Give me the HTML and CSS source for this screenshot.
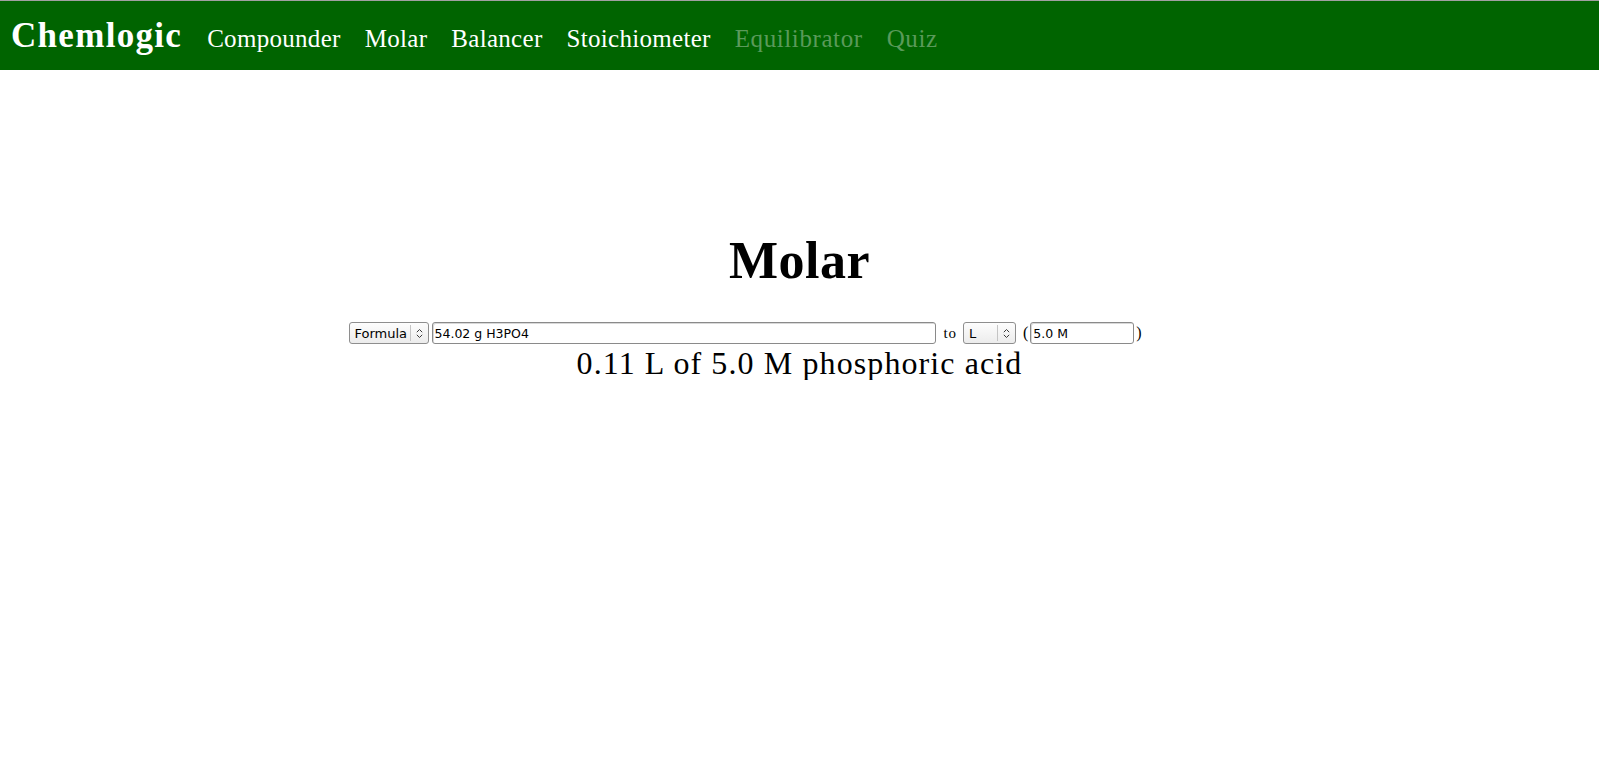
FILE: index.html
```html
<!DOCTYPE html>
<html>
<head>
<meta charset="utf-8">
<title>Chemlogic - Molar</title>
<link rel="stylesheet" href="styles.css">
</head>
<body>
<nav class="topbar">
  <a class="brand" href="#">Chemlogic</a>
  <a class="nav-link" href="#">Compounder</a>
  <a class="nav-link" href="#">Molar</a>
  <a class="nav-link" href="#">Balancer</a>
  <a class="nav-link" href="#">Stoichiometer</a>
  <a class="nav-link disabled" href="#">Equilibrator</a>
  <a class="nav-link disabled" href="#">Quiz</a>
</nav>
<main class="content">
  <h1 class="title">Molar</h1>
  <form class="molar-form">
    <span class="select sel-type"><span class="sel-text">Formula</span><span class="sel-btn"><svg width="9" height="11" viewBox="0 0 9 11"><path d="M1.8 4.2 L4.5 1.5 L7.2 4.2 M1.8 6.8 L4.5 9.5 L7.2 6.8" fill="none" stroke="#3a3a3a" stroke-width="1"/></svg></span></span>
    <input class="field field-main" type="text" value="54.02 g H3PO4">
    <span class="word">to</span>
    <span class="select sel-unit"><span class="sel-text">L</span><span class="sel-btn"><svg width="9" height="11" viewBox="0 0 9 11"><path d="M1.8 4.2 L4.5 1.5 L7.2 4.2 M1.8 6.8 L4.5 9.5 L7.2 6.8" fill="none" stroke="#3a3a3a" stroke-width="1"/></svg></span></span>
    <span class="paren paren-open">(</span><input class="field field-conc" type="text" value="5.0 M"><span class="paren paren-close">)</span>
  </form>
  <p class="result">0.11 L of 5.0 M phosphoric acid</p>
</main>
</body>
</html>
```
FILE: styles.css
```css
html, body {
  margin: 0;
  padding: 0;
  background: #fff;
}
body {
  font-family: "Liberation Serif", "Times New Roman", serif;
  color: #000;
  border-top: 1px solid #a0a0a0;
}
.topbar {
  background: #006400;
  height: 69px;
  display: flex;
  align-items: baseline;
  padding-left: 11px;
  gap: 24px;
  box-sizing: border-box;
}
.topbar a {
  text-decoration: none;
  color: #fff;
  line-height: 70px;
}
.brand {
  font-weight: bold;
  font-size: 35px;
  letter-spacing: 1.3px;
  margin-right: 1px;
}
.nav-link {
  font-size: 25px;
  letter-spacing: 0.3px;
}
.nav-link.disabled {
  color: #5a9a5a;
  letter-spacing: 0.6px;
}
.content {
  text-align: center;
}
.title {
  margin: 0;
  padding-top: 151px;
  font-size: 52px;
  font-weight: bold;
  line-height: 80px;
  letter-spacing: 0.5px;
}
.molar-form {
  width: 902px;
  margin: 21px auto 0;
  text-align: left;
  display: flex;
  align-items: center;
  height: 22px;
  font-size: 15px;
}
.select {
  box-sizing: border-box;
  height: 22px;
  border: 1px solid #8e8e8e;
  border-radius: 3px;
  background: linear-gradient(#fdfdfd, #ececec);
  display: flex;
  align-items: center;
  font-family: "DejaVu Sans", sans-serif;
  font-size: 13px;
  color: #000;
}
.sel-text {
  flex: 1;
  padding-left: 5px;
}
.sel-btn {
  width: 17px;
  height: 16px;
  border-left: 1px solid #c4c4c4;
  display: flex;
  align-items: center;
  justify-content: center;
}
.sel-type {
  width: 80px;
}
.sel-unit {
  width: 53px;
}
.field {
  box-sizing: border-box;
  height: 22px;
  border: 1px solid #8a8a8a;
  border-radius: 3px;
  font-family: "DejaVu Sans", sans-serif;
  font-size: 12.5px;
  padding: 0 2px;
  margin: 0;
  background: #fff;
  color: #000;
  box-shadow: inset 1px 1px 0 #d8d8d8;
}
.field-main {
  width: 504px;
  margin-left: 3px;
}
.field-conc {
  width: 104px;
}
.word {
  margin: 0 6px 0 8px;
  font-size: 15px;
  letter-spacing: 0.9px;
}
.paren {
  font-size: 16px;
}
.paren-open {
  margin: 0 2px 0 7px;
}
.paren-close {
  margin-left: 2px;
}
.result {
  margin: 2px 0 0;
  font-size: 32px;
  letter-spacing: 1.1px;
  line-height: 34px;
}
```
